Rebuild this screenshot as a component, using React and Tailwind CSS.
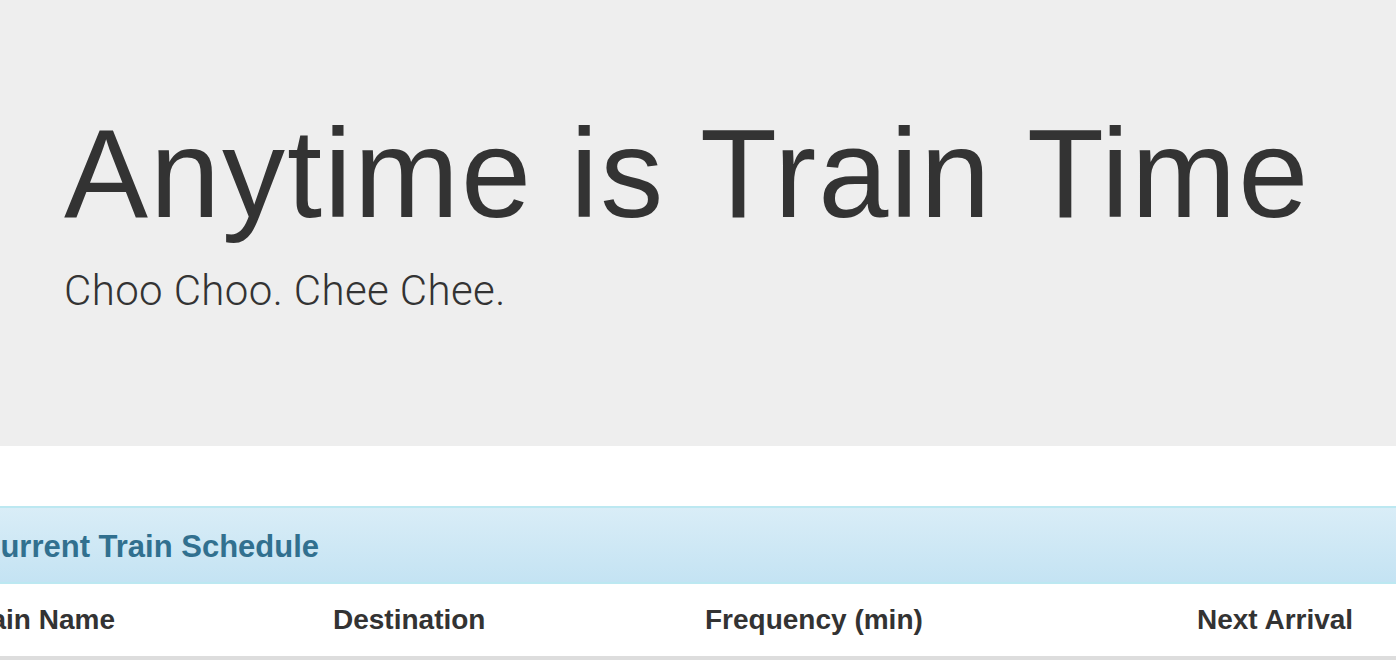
import React from 'react';

const columns = [
    { label: 'Train Name', width: 'w-[369px]' },
    { label: 'Destination', width: 'w-[372px]' },
    { label: 'Frequency (min)', width: 'w-[492px]' },
    { label: 'Next Arrival', width: 'w-[300px]' },
    { label: 'Minutes Away', width: 'w-[300px]' },
];

const App = () => {
    return (
        <div className="h-[660px] w-full overflow-hidden bg-white text-[#333] font-['Liberation_Sans',Arial,sans-serif]">
            {/* jumbotron */}
            <div className="h-[446px] bg-[#eeeeee] pt-[105px] pl-[64px]">
                <h1 className="text-[126px] leading-[1.1] font-normal tracking-[2px] whitespace-nowrap">
                    Anytime is Train Time
                </h1>
                <p className="mt-[17px] text-[42px] leading-[60px] font-light font-['Roboto',sans-serif] tracking-[0.4px]">
                    Choo Choo. Chee Chee.
                </p>
            </div>

            {/* schedule panel */}
            <div className="mt-[60px] ml-[-54px] w-[1900px] border-2 border-[#bce8f1] rounded-[8px]">
                <div className="h-[76px] px-[30px] pt-[22px] bg-gradient-to-b from-[#d9edf7] to-[#c4e3f3] border-b-2 border-[#bce8f1] rounded-t-[6px]">
                    <h3 className="text-[31px] leading-[1.1] font-bold text-[#31708f] whitespace-nowrap">
                        Current Train Schedule
                    </h3>
                </div>
                <table className="table-fixed border-collapse">
                    <thead>
                        <tr className="border-b-4 border-[#dddddd]">
                            {columns.map((c) => (
                                <th
                                    key={c.label}
                                    className={`${c.width} px-[16px] py-[16px] text-left text-[28px] leading-[40px] font-bold whitespace-nowrap`}
                                >
                                    {c.label}
                                </th>
                            ))}
                        </tr>
                    </thead>
                </table>
            </div>
        </div>
    );
};

export default App;
